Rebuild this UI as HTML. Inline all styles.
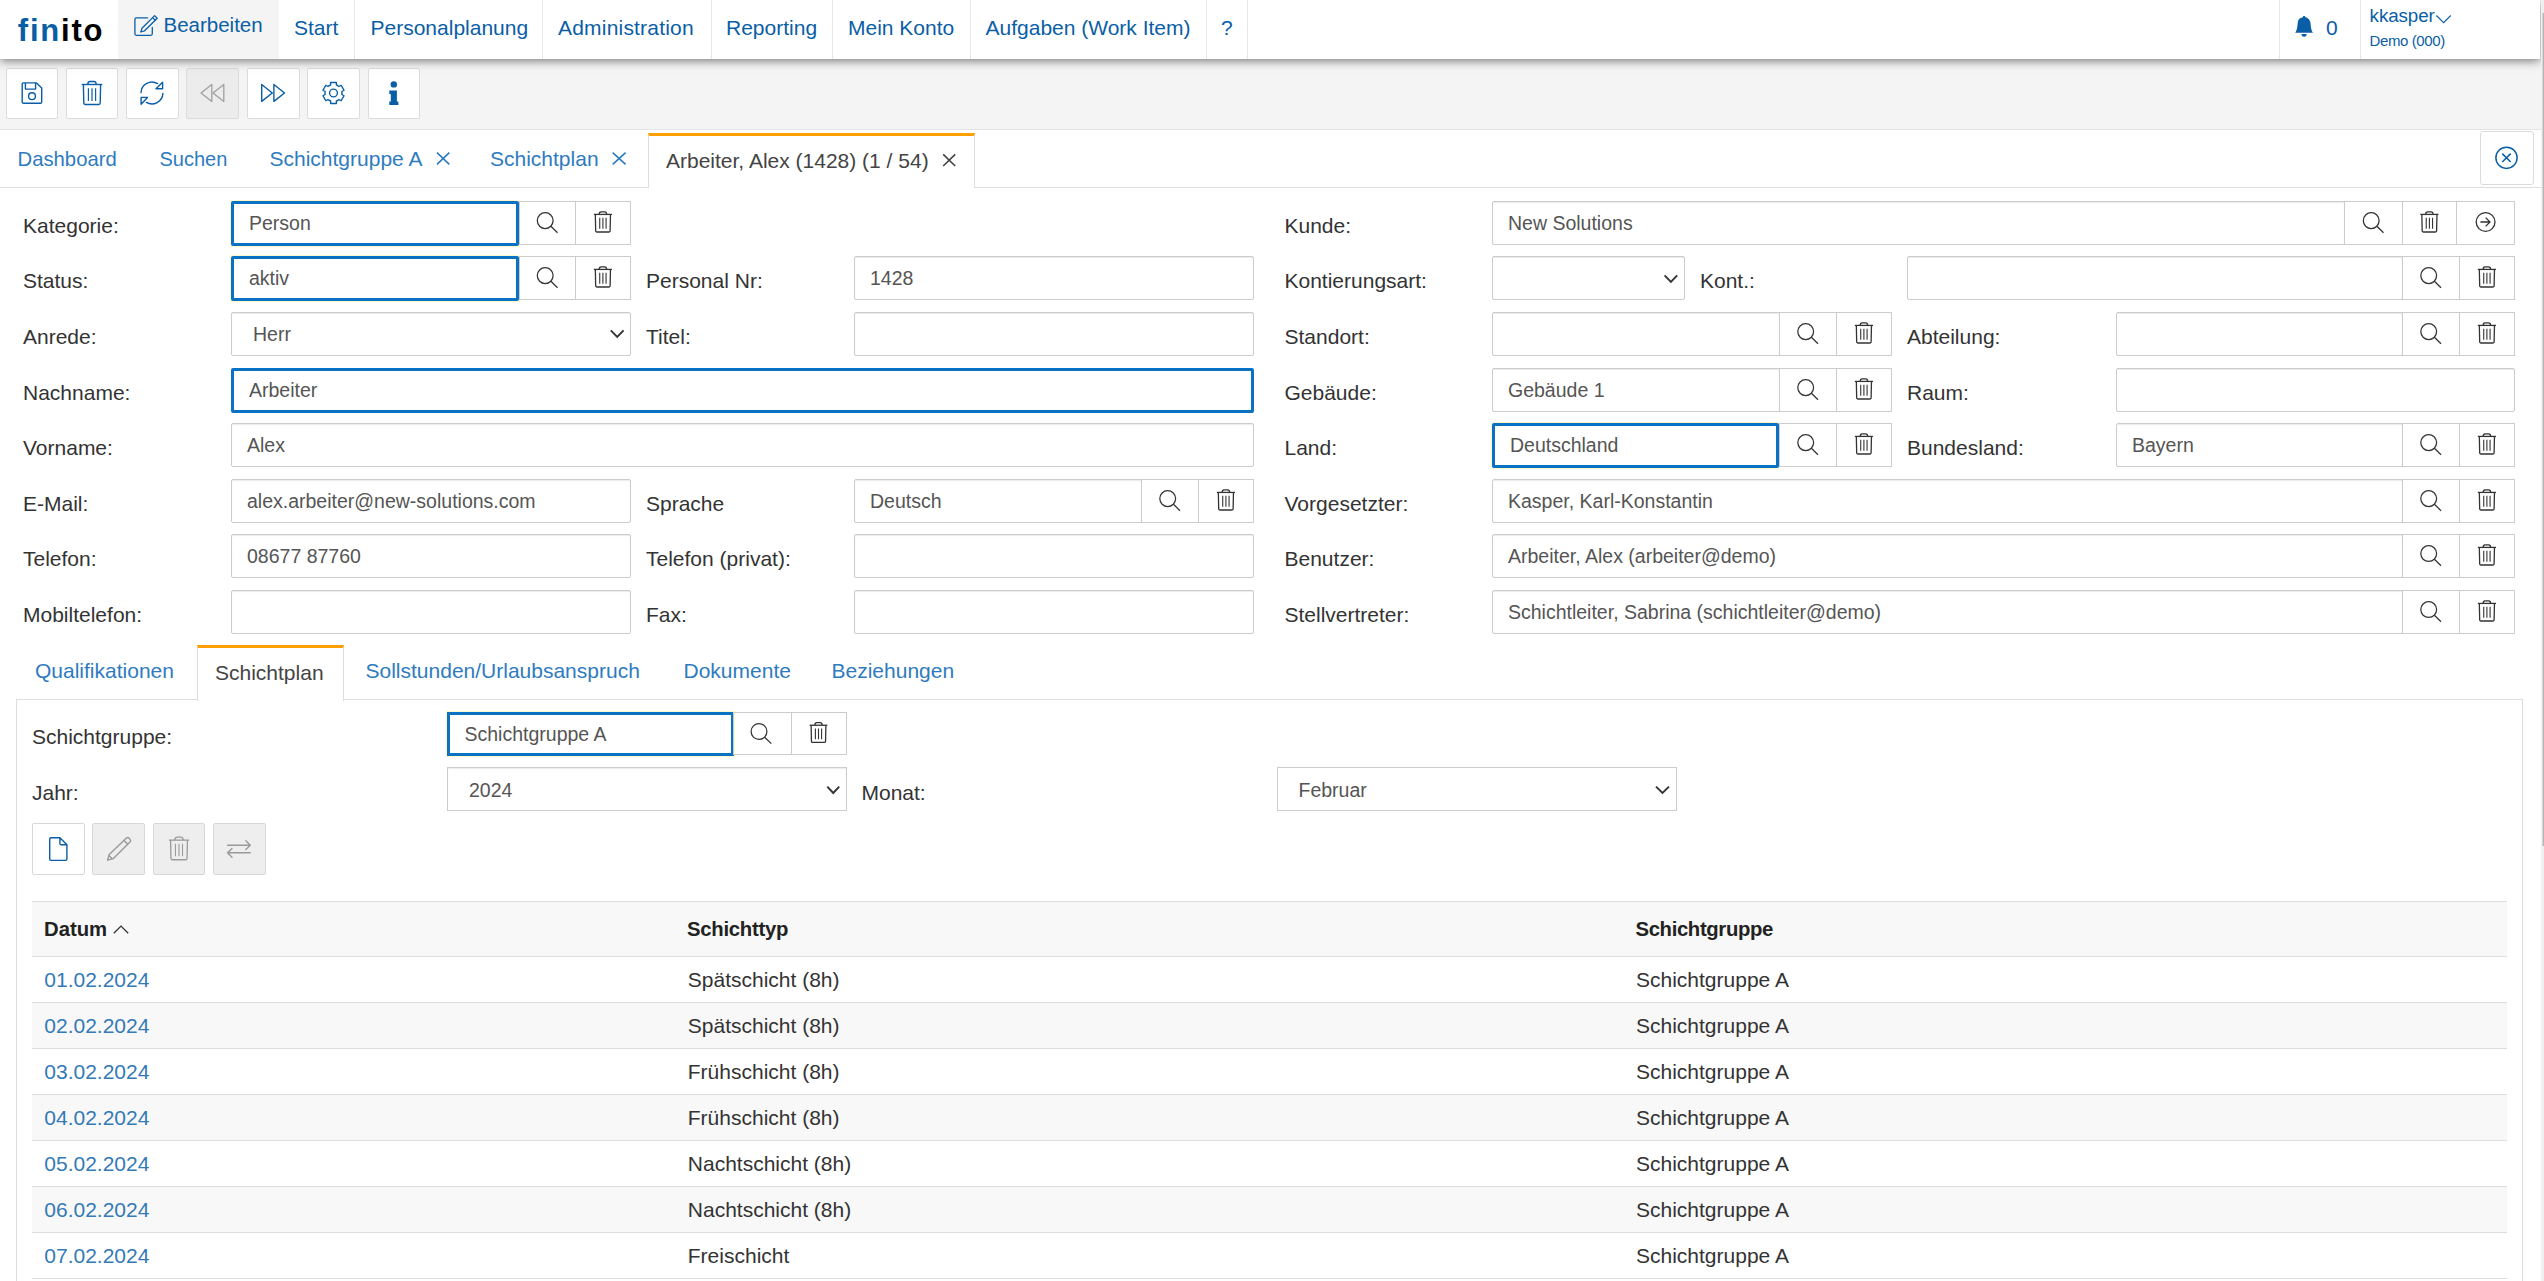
<!DOCTYPE html>
<html><head><meta charset="utf-8"><title>finito</title>
<style>
html,body{margin:0;padding:0;background:#fff;width:2544px;height:1281px;overflow:hidden;position:relative}
.a{position:absolute;box-sizing:border-box}
.t{position:absolute;white-space:nowrap;line-height:1;font-family:"Liberation Sans",sans-serif}
svg{position:absolute;left:0;top:0;z-index:5;pointer-events:none}
</style></head><body>
<div class="a" style="left:2541px;top:0px;width:3px;height:1281px;background:#f0f0f0;z-index:8"></div>
<div class="a" style="left:2542px;top:13px;width:1px;height:833px;background:#d8d8d8;z-index:8"></div>
<div class="a" style="left:2543px;top:13px;width:1px;height:833px;background:#b4b4b4;z-index:8"></div>
<div class="a" style="left:0px;top:58px;width:2541px;height:72px;background:#f4f4f4;border-bottom:1px solid #e3e3e3"></div>
<div class="a" style="left:6px;top:68px;width:52px;height:51px;background:#fff;border:1px solid #dcdcdc;border-radius:2px"></div>
<div class="a" style="left:66px;top:68px;width:52px;height:51px;background:#fff;border:1px solid #dcdcdc;border-radius:2px"></div>
<div class="a" style="left:126px;top:68px;width:53px;height:51px;background:#fff;border:1px solid #dcdcdc;border-radius:2px"></div>
<div class="a" style="left:186px;top:68px;width:53px;height:51px;background:#ececec;border:1px solid #dcdcdc;border-radius:2px"></div>
<div class="a" style="left:247px;top:68px;width:53px;height:51px;background:#fff;border:1px solid #dcdcdc;border-radius:2px"></div>
<div class="a" style="left:307px;top:68px;width:53px;height:51px;background:#fff;border:1px solid #dcdcdc;border-radius:2px"></div>
<div class="a" style="left:368px;top:68px;width:52px;height:51px;background:#fff;border:1px solid #dcdcdc;border-radius:2px"></div>
<div class="a" style="left:0px;top:0px;width:2540px;height:59px;background:#fff;box-shadow:0 2px 9px rgba(0,0,0,.5);z-index:2"></div>
<div class="a" style="left:118px;top:0px;width:161px;height:59px;background:#f4f4f4;z-index:2"></div>
<div class="a" style="left:354px;top:0px;width:1px;height:59px;background:#e6e6e6;z-index:2"></div>
<div class="a" style="left:542px;top:0px;width:1px;height:59px;background:#e6e6e6;z-index:2"></div>
<div class="a" style="left:711px;top:0px;width:1px;height:59px;background:#e6e6e6;z-index:2"></div>
<div class="a" style="left:832px;top:0px;width:1px;height:59px;background:#e6e6e6;z-index:2"></div>
<div class="a" style="left:970px;top:0px;width:1px;height:59px;background:#e6e6e6;z-index:2"></div>
<div class="a" style="left:1206px;top:0px;width:1px;height:59px;background:#e6e6e6;z-index:2"></div>
<div class="a" style="left:1247px;top:0px;width:1px;height:59px;background:#e6e6e6;z-index:2"></div>
<div class="a" style="left:2279px;top:0px;width:1px;height:59px;background:#e6e6e6;z-index:2"></div>
<div class="a" style="left:2360px;top:0px;width:1px;height:59px;background:#e6e6e6;z-index:2"></div>
<div class="t" style="left:17.8px;top:15px;font-size:31px;color:#000;font-weight:bold;z-index:3;letter-spacing:1.8px"><span style="color:#0a5ea6">fin</span>ito</div>
<div class="t" style="left:163.5px;top:15px;font-size:20.5px;color:#0a5ea6;z-index:3;">Bearbeiten</div>
<div class="t" style="left:294px;top:17px;font-size:21px;color:#0a5ea6;z-index:3;">Start</div>
<div class="t" style="left:370.5px;top:17px;font-size:21px;color:#0a5ea6;z-index:3;">Personalplanung</div>
<div class="t" style="left:558px;top:17px;font-size:21px;color:#0a5ea6;z-index:3;letter-spacing:0.2px">Administration</div>
<div class="t" style="left:726px;top:17px;font-size:21px;color:#0a5ea6;z-index:3;">Reporting</div>
<div class="t" style="left:848px;top:17px;font-size:21px;color:#0a5ea6;z-index:3;">Mein Konto</div>
<div class="t" style="left:985.5px;top:17px;font-size:21px;color:#0a5ea6;z-index:3;">Aufgaben (Work Item)</div>
<div class="t" style="left:1221px;top:17px;font-size:21px;color:#0a5ea6;z-index:3;">?</div>
<div class="t" style="left:2326px;top:17px;font-size:21px;color:#0a5ea6;z-index:3;">0</div>
<div class="t" style="left:2369.6px;top:7px;font-size:18.8px;color:#0a5ea6;z-index:3;letter-spacing:-0.1px">kkasper</div>
<div class="t" style="left:2369.6px;top:33px;font-size:15px;color:#0a5ea6;z-index:3;letter-spacing:-0.4px">Demo (000)</div>
<div class="a" style="left:0px;top:187px;width:2541px;height:1px;background:#ddd"></div>
<div class="t" style="left:17.5px;top:149px;font-size:20.3px;color:#2e7bbf;">Dashboard</div>
<div class="t" style="left:159.5px;top:149px;font-size:20px;color:#2e7bbf;">Suchen</div>
<div class="t" style="left:269.5px;top:148px;font-size:21px;color:#2e7bbf;">Schichtgruppe A</div>
<div class="t" style="left:490px;top:148px;font-size:21px;color:#2e7bbf;">Schichtplan</div>
<div class="a" style="left:648px;top:133px;width:327px;height:55px;background:#fff;border-left:1px solid #ddd;border-right:1px solid #ddd;border-top:3px solid #ffa000;box-sizing:border-box"></div>
<div class="t" style="left:666px;top:150px;font-size:21px;color:#444;">Arbeiter, Alex (1428) (1 / 54)</div>
<div class="a" style="left:2480px;top:131px;width:54px;height:54px;border:1px solid #dcdcdc;border-radius:3px;box-sizing:border-box"></div>
<div class="t" style="left:23px;top:215px;font-size:21px;color:#333;">Kategorie:</div>
<div class="a" style="left:231px;top:201px;width:288px;height:45px;background:#fff;border:3px solid #0a72c4;box-sizing:border-box;border-radius:2px;box-shadow:0 0 0 1px #fff6c8;"></div>
<div class="t" style="left:249px;top:214px;font-size:19.5px;color:#555;">Person</div>
<div class="a" style="left:519px;top:201px;width:57px;height:44px;background:#fff;border:1px solid #ccc;box-sizing:border-box"></div>
<div class="a" style="left:575px;top:201px;width:56px;height:44px;background:#fff;border:1px solid #ccc;box-sizing:border-box"></div>
<div class="t" style="left:23px;top:270px;font-size:21px;color:#333;">Status:</div>
<div class="a" style="left:231px;top:256px;width:288px;height:45px;background:#fff;border:3px solid #0a72c4;box-sizing:border-box;border-radius:2px;box-shadow:0 0 0 1px #fff6c8;"></div>
<div class="t" style="left:249px;top:269px;font-size:19.5px;color:#555;">aktiv</div>
<div class="a" style="left:519px;top:256px;width:57px;height:44px;background:#fff;border:1px solid #ccc;box-sizing:border-box"></div>
<div class="a" style="left:575px;top:256px;width:56px;height:44px;background:#fff;border:1px solid #ccc;box-sizing:border-box"></div>
<div class="t" style="left:23px;top:326px;font-size:21px;color:#333;">Anrede:</div>
<div class="a" style="left:231px;top:312px;width:400px;height:44px;background:#fff;border:1px solid #ccc;box-sizing:border-box;border-radius:2px;box-shadow:inset 0 1px 1px rgba(0,0,0,.08)"></div>
<div class="t" style="left:253px;top:325px;font-size:19.5px;color:#555;">Herr</div>
<div class="t" style="left:23px;top:382px;font-size:21px;color:#333;">Nachname:</div>
<div class="a" style="left:231px;top:368px;width:1023px;height:45px;background:#fff;border:3px solid #0a72c4;box-sizing:border-box;border-radius:2px;"></div>
<div class="t" style="left:249px;top:381px;font-size:19.5px;color:#555;">Arbeiter</div>
<div class="t" style="left:23px;top:437px;font-size:21px;color:#333;">Vorname:</div>
<div class="a" style="left:231px;top:423px;width:1023px;height:44px;background:#fff;border:1px solid #ccc;box-sizing:border-box;border-radius:2px;box-shadow:inset 0 1px 1px rgba(0,0,0,.08)"></div>
<div class="t" style="left:247px;top:436px;font-size:19.5px;color:#555;">Alex</div>
<div class="t" style="left:23px;top:493px;font-size:21px;color:#333;">E-Mail:</div>
<div class="a" style="left:231px;top:479px;width:400px;height:44px;background:#fff;border:1px solid #ccc;box-sizing:border-box;border-radius:2px;box-shadow:inset 0 1px 1px rgba(0,0,0,.08)"></div>
<div class="t" style="left:247px;top:492px;font-size:19.5px;color:#555;">alex.arbeiter@new-solutions.com</div>
<div class="t" style="left:23px;top:548px;font-size:21px;color:#333;">Telefon:</div>
<div class="a" style="left:231px;top:534px;width:400px;height:44px;background:#fff;border:1px solid #ccc;box-sizing:border-box;border-radius:2px;box-shadow:inset 0 1px 1px rgba(0,0,0,.08)"></div>
<div class="t" style="left:247px;top:547px;font-size:19.5px;color:#555;">08677 87760</div>
<div class="t" style="left:23px;top:604px;font-size:21px;color:#333;">Mobiltelefon:</div>
<div class="a" style="left:231px;top:590px;width:400px;height:44px;background:#fff;border:1px solid #ccc;box-sizing:border-box;border-radius:2px;box-shadow:inset 0 1px 1px rgba(0,0,0,.08)"></div>
<div class="t" style="left:646px;top:270px;font-size:21px;color:#333;">Personal Nr:</div>
<div class="a" style="left:854px;top:256px;width:400px;height:44px;background:#fff;border:1px solid #ccc;box-sizing:border-box;border-radius:2px;box-shadow:inset 0 1px 1px rgba(0,0,0,.08)"></div>
<div class="t" style="left:870px;top:269px;font-size:19.5px;color:#555;">1428</div>
<div class="t" style="left:646px;top:326px;font-size:21px;color:#333;">Titel:</div>
<div class="a" style="left:854px;top:312px;width:400px;height:44px;background:#fff;border:1px solid #ccc;box-sizing:border-box;border-radius:2px;box-shadow:inset 0 1px 1px rgba(0,0,0,.08)"></div>
<div class="t" style="left:646px;top:493px;font-size:21px;color:#333;">Sprache</div>
<div class="a" style="left:854px;top:479px;width:288px;height:44px;background:#fff;border:1px solid #ccc;box-sizing:border-box;border-radius:2px;box-shadow:inset 0 1px 1px rgba(0,0,0,.08)"></div>
<div class="t" style="left:870px;top:492px;font-size:19.5px;color:#555;">Deutsch</div>
<div class="a" style="left:1141px;top:479px;width:58px;height:44px;background:#fff;border:1px solid #ccc;box-sizing:border-box"></div>
<div class="a" style="left:1198px;top:479px;width:56px;height:44px;background:#fff;border:1px solid #ccc;box-sizing:border-box"></div>
<div class="t" style="left:646px;top:548px;font-size:21px;color:#333;">Telefon (privat):</div>
<div class="a" style="left:854px;top:534px;width:400px;height:44px;background:#fff;border:1px solid #ccc;box-sizing:border-box;border-radius:2px;box-shadow:inset 0 1px 1px rgba(0,0,0,.08)"></div>
<div class="t" style="left:646px;top:604px;font-size:21px;color:#333;">Fax:</div>
<div class="a" style="left:854px;top:590px;width:400px;height:44px;background:#fff;border:1px solid #ccc;box-sizing:border-box;border-radius:2px;box-shadow:inset 0 1px 1px rgba(0,0,0,.08)"></div>
<div class="t" style="left:1284.5px;top:215px;font-size:21px;color:#333;">Kunde:</div>
<div class="a" style="left:1492px;top:201px;width:853px;height:44px;background:#fff;border:1px solid #ccc;box-sizing:border-box;border-radius:2px;box-shadow:inset 0 1px 1px rgba(0,0,0,.08)"></div>
<div class="t" style="left:1508px;top:214px;font-size:19.5px;color:#555;">New Solutions</div>
<div class="a" style="left:2344px;top:201px;width:59px;height:44px;background:#fff;border:1px solid #ccc;box-sizing:border-box"></div>
<div class="a" style="left:2402px;top:201px;width:55px;height:44px;background:#fff;border:1px solid #ccc;box-sizing:border-box"></div>
<div class="a" style="left:2456px;top:201px;width:59px;height:44px;background:#fff;border:1px solid #ccc;box-sizing:border-box"></div>
<div class="t" style="left:1284.5px;top:270px;font-size:21px;color:#333;">Kontierungsart:</div>
<div class="a" style="left:1492px;top:256px;width:193px;height:44px;background:#fff;border:1px solid #ccc;box-sizing:border-box;border-radius:2px;box-shadow:inset 0 1px 1px rgba(0,0,0,.08)"></div>
<div class="t" style="left:1700px;top:270px;font-size:21px;color:#333;">Kont.:</div>
<div class="a" style="left:1907px;top:256px;width:496px;height:44px;background:#fff;border:1px solid #ccc;box-sizing:border-box;border-radius:2px;box-shadow:inset 0 1px 1px rgba(0,0,0,.08)"></div>
<div class="a" style="left:2402px;top:256px;width:58px;height:44px;background:#fff;border:1px solid #ccc;box-sizing:border-box"></div>
<div class="a" style="left:2459px;top:256px;width:56px;height:44px;background:#fff;border:1px solid #ccc;box-sizing:border-box"></div>
<div class="t" style="left:1284.5px;top:326px;font-size:21px;color:#333;">Standort:</div>
<div class="a" style="left:1492px;top:312px;width:288px;height:44px;background:#fff;border:1px solid #ccc;box-sizing:border-box;border-radius:2px;box-shadow:inset 0 1px 1px rgba(0,0,0,.08)"></div>
<div class="a" style="left:1779px;top:312px;width:58px;height:44px;background:#fff;border:1px solid #ccc;box-sizing:border-box"></div>
<div class="a" style="left:1836px;top:312px;width:56px;height:44px;background:#fff;border:1px solid #ccc;box-sizing:border-box"></div>
<div class="t" style="left:1907px;top:326px;font-size:21px;color:#333;">Abteilung:</div>
<div class="a" style="left:2116px;top:312px;width:287px;height:44px;background:#fff;border:1px solid #ccc;box-sizing:border-box;border-radius:2px;box-shadow:inset 0 1px 1px rgba(0,0,0,.08)"></div>
<div class="a" style="left:2402px;top:312px;width:58px;height:44px;background:#fff;border:1px solid #ccc;box-sizing:border-box"></div>
<div class="a" style="left:2459px;top:312px;width:56px;height:44px;background:#fff;border:1px solid #ccc;box-sizing:border-box"></div>
<div class="t" style="left:1284.5px;top:382px;font-size:21px;color:#333;">Gebäude:</div>
<div class="a" style="left:1492px;top:368px;width:288px;height:44px;background:#fff;border:1px solid #ccc;box-sizing:border-box;border-radius:2px;box-shadow:inset 0 1px 1px rgba(0,0,0,.08)"></div>
<div class="t" style="left:1508px;top:381px;font-size:19.5px;color:#555;">Gebäude 1</div>
<div class="a" style="left:1779px;top:368px;width:58px;height:44px;background:#fff;border:1px solid #ccc;box-sizing:border-box"></div>
<div class="a" style="left:1836px;top:368px;width:56px;height:44px;background:#fff;border:1px solid #ccc;box-sizing:border-box"></div>
<div class="t" style="left:1907px;top:382px;font-size:21px;color:#333;">Raum:</div>
<div class="a" style="left:2116px;top:368px;width:399px;height:44px;background:#fff;border:1px solid #ccc;box-sizing:border-box;border-radius:2px;box-shadow:inset 0 1px 1px rgba(0,0,0,.08)"></div>
<div class="t" style="left:1284.5px;top:437px;font-size:21px;color:#333;">Land:</div>
<div class="a" style="left:1492px;top:423px;width:287px;height:45px;background:#fff;border:3px solid #0a72c4;box-sizing:border-box;border-radius:2px;box-shadow:0 0 0 1px #fff6c8;"></div>
<div class="t" style="left:1510px;top:436px;font-size:19.5px;color:#555;">Deutschland</div>
<div class="a" style="left:1779px;top:423px;width:58px;height:44px;background:#fff;border:1px solid #ccc;box-sizing:border-box"></div>
<div class="a" style="left:1836px;top:423px;width:56px;height:44px;background:#fff;border:1px solid #ccc;box-sizing:border-box"></div>
<div class="t" style="left:1907px;top:437px;font-size:21px;color:#333;">Bundesland:</div>
<div class="a" style="left:2116px;top:423px;width:287px;height:44px;background:#fff;border:1px solid #ccc;box-sizing:border-box;border-radius:2px;box-shadow:inset 0 1px 1px rgba(0,0,0,.08)"></div>
<div class="t" style="left:2132px;top:436px;font-size:19.5px;color:#555;">Bayern</div>
<div class="a" style="left:2402px;top:423px;width:58px;height:44px;background:#fff;border:1px solid #ccc;box-sizing:border-box"></div>
<div class="a" style="left:2459px;top:423px;width:56px;height:44px;background:#fff;border:1px solid #ccc;box-sizing:border-box"></div>
<div class="t" style="left:1284.5px;top:493px;font-size:21px;color:#333;">Vorgesetzter:</div>
<div class="a" style="left:1492px;top:479px;width:911px;height:44px;background:#fff;border:1px solid #ccc;box-sizing:border-box;border-radius:2px;box-shadow:inset 0 1px 1px rgba(0,0,0,.08)"></div>
<div class="t" style="left:1508px;top:492px;font-size:19.5px;color:#555;">Kasper, Karl-Konstantin</div>
<div class="a" style="left:2402px;top:479px;width:58px;height:44px;background:#fff;border:1px solid #ccc;box-sizing:border-box"></div>
<div class="a" style="left:2459px;top:479px;width:56px;height:44px;background:#fff;border:1px solid #ccc;box-sizing:border-box"></div>
<div class="t" style="left:1284.5px;top:548px;font-size:21px;color:#333;">Benutzer:</div>
<div class="a" style="left:1492px;top:534px;width:911px;height:44px;background:#fff;border:1px solid #ccc;box-sizing:border-box;border-radius:2px;box-shadow:inset 0 1px 1px rgba(0,0,0,.08)"></div>
<div class="t" style="left:1508px;top:547px;font-size:19.5px;color:#555;">Arbeiter, Alex (arbeiter@demo)</div>
<div class="a" style="left:2402px;top:534px;width:58px;height:44px;background:#fff;border:1px solid #ccc;box-sizing:border-box"></div>
<div class="a" style="left:2459px;top:534px;width:56px;height:44px;background:#fff;border:1px solid #ccc;box-sizing:border-box"></div>
<div class="t" style="left:1284.5px;top:604px;font-size:21px;color:#333;">Stellvertreter:</div>
<div class="a" style="left:1492px;top:590px;width:911px;height:44px;background:#fff;border:1px solid #ccc;box-sizing:border-box;border-radius:2px;box-shadow:inset 0 1px 1px rgba(0,0,0,.08)"></div>
<div class="t" style="left:1508px;top:603px;font-size:19.5px;color:#555;">Schichtleiter, Sabrina (schichtleiter@demo)</div>
<div class="a" style="left:2402px;top:590px;width:58px;height:44px;background:#fff;border:1px solid #ccc;box-sizing:border-box"></div>
<div class="a" style="left:2459px;top:590px;width:56px;height:44px;background:#fff;border:1px solid #ccc;box-sizing:border-box"></div>
<div class="a" style="left:16px;top:699px;width:2507px;height:700px;border:1px solid #ddd;box-sizing:border-box"></div>
<div class="a" style="left:197px;top:645px;width:147px;height:56px;background:#fff;border-left:1px solid #ddd;border-right:1px solid #ddd;border-top:3px solid #ffa000;box-sizing:border-box"></div>
<div class="t" style="left:35px;top:660px;font-size:21px;color:#2e7bbf;">Qualifikationen</div>
<div class="t" style="left:215px;top:662px;font-size:21px;color:#444;">Schichtplan</div>
<div class="t" style="left:365.5px;top:660px;font-size:21px;color:#2e7bbf;">Sollstunden/Urlaubsanspruch</div>
<div class="t" style="left:683.5px;top:660px;font-size:21px;color:#2e7bbf;">Dokumente</div>
<div class="t" style="left:831.5px;top:660px;font-size:21px;color:#2e7bbf;">Beziehungen</div>
<div class="t" style="left:32px;top:726px;font-size:21px;color:#333;">Schichtgruppe:</div>
<div class="a" style="left:447px;top:712px;width:287px;height:44px;background:#fff;border:3px solid #0a72c4;box-sizing:border-box;box-shadow:0 0 0 1px #fff6c8"></div>
<div class="t" style="left:464.5px;top:725px;font-size:19.5px;color:#555;">Schichtgruppe A</div>
<div class="a" style="left:733px;top:712px;width:59px;height:43px;border:1px solid #ccc;box-sizing:border-box"></div>
<div class="a" style="left:791px;top:712px;width:56px;height:43px;border:1px solid #ccc;box-sizing:border-box"></div>
<div class="t" style="left:32px;top:782px;font-size:21px;color:#333;">Jahr:</div>
<div class="a" style="left:447px;top:767px;width:400px;height:44px;border:1px solid #ccc;box-sizing:border-box;box-shadow:inset 0 1px 1px rgba(0,0,0,.08)"></div>
<div class="t" style="left:469px;top:781px;font-size:19.5px;color:#555;">2024</div>
<div class="t" style="left:861.5px;top:782px;font-size:21px;color:#333;">Monat:</div>
<div class="a" style="left:1277px;top:767px;width:400px;height:44px;border:1px solid #ccc;box-sizing:border-box"></div>
<div class="t" style="left:1298.5px;top:781px;font-size:19.5px;color:#555;">Februar</div>
<div class="a" style="left:32px;top:823px;width:53px;height:52px;background:#fff;border:1px solid #d8d8d8;border-radius:2px;box-sizing:border-box"></div>
<div class="a" style="left:92px;top:823px;width:53px;height:52px;background:#eee;border:1px solid #d8d8d8;border-radius:2px;box-sizing:border-box"></div>
<div class="a" style="left:153px;top:823px;width:52px;height:52px;background:#eee;border:1px solid #d8d8d8;border-radius:2px;box-sizing:border-box"></div>
<div class="a" style="left:213px;top:823px;width:53px;height:52px;background:#eee;border:1px solid #d8d8d8;border-radius:2px;box-sizing:border-box"></div>
<div class="a" style="left:32px;top:901px;width:2475px;height:56px;background:#f8f8f8;border-top:1px solid #ddd;border-bottom:1px solid #ddd;box-sizing:border-box"></div>
<div class="t" style="left:44px;top:919px;font-size:20.3px;color:#222;font-weight:bold;">Datum</div>
<div class="t" style="left:687px;top:919px;font-size:20.3px;color:#222;font-weight:bold;letter-spacing:-0.25px">Schichttyp</div>
<div class="t" style="left:1635.5px;top:919px;font-size:20.3px;color:#222;font-weight:bold;letter-spacing:-0.35px">Schichtgruppe</div>
<div class="a" style="left:32px;top:957px;width:2475px;height:46px;background:#fff;border-bottom:1px solid #ddd;box-sizing:border-box"></div>
<div class="t" style="left:44.3px;top:969px;font-size:21px;color:#337ab7;">01.02.2024</div>
<div class="t" style="left:687.8px;top:969px;font-size:21px;color:#333;">Spätschicht (8h)</div>
<div class="t" style="left:1636px;top:969px;font-size:21px;color:#333;">Schichtgruppe A</div>
<div class="a" style="left:32px;top:1003px;width:2475px;height:46px;background:#f8f8f8;border-bottom:1px solid #ddd;box-sizing:border-box"></div>
<div class="t" style="left:44.3px;top:1015px;font-size:21px;color:#337ab7;">02.02.2024</div>
<div class="t" style="left:687.8px;top:1015px;font-size:21px;color:#333;">Spätschicht (8h)</div>
<div class="t" style="left:1636px;top:1015px;font-size:21px;color:#333;">Schichtgruppe A</div>
<div class="a" style="left:32px;top:1049px;width:2475px;height:46px;background:#fff;border-bottom:1px solid #ddd;box-sizing:border-box"></div>
<div class="t" style="left:44.3px;top:1061px;font-size:21px;color:#337ab7;">03.02.2024</div>
<div class="t" style="left:687.8px;top:1061px;font-size:21px;color:#333;">Frühschicht (8h)</div>
<div class="t" style="left:1636px;top:1061px;font-size:21px;color:#333;">Schichtgruppe A</div>
<div class="a" style="left:32px;top:1095px;width:2475px;height:46px;background:#f8f8f8;border-bottom:1px solid #ddd;box-sizing:border-box"></div>
<div class="t" style="left:44.3px;top:1107px;font-size:21px;color:#337ab7;">04.02.2024</div>
<div class="t" style="left:687.8px;top:1107px;font-size:21px;color:#333;">Frühschicht (8h)</div>
<div class="t" style="left:1636px;top:1107px;font-size:21px;color:#333;">Schichtgruppe A</div>
<div class="a" style="left:32px;top:1141px;width:2475px;height:46px;background:#fff;border-bottom:1px solid #ddd;box-sizing:border-box"></div>
<div class="t" style="left:44.3px;top:1153px;font-size:21px;color:#337ab7;">05.02.2024</div>
<div class="t" style="left:687.8px;top:1153px;font-size:21px;color:#333;">Nachtschicht (8h)</div>
<div class="t" style="left:1636px;top:1153px;font-size:21px;color:#333;">Schichtgruppe A</div>
<div class="a" style="left:32px;top:1187px;width:2475px;height:46px;background:#f8f8f8;border-bottom:1px solid #ddd;box-sizing:border-box"></div>
<div class="t" style="left:44.3px;top:1199px;font-size:21px;color:#337ab7;">06.02.2024</div>
<div class="t" style="left:687.8px;top:1199px;font-size:21px;color:#333;">Nachtschicht (8h)</div>
<div class="t" style="left:1636px;top:1199px;font-size:21px;color:#333;">Schichtgruppe A</div>
<div class="a" style="left:32px;top:1233px;width:2475px;height:46px;background:#fff;border-bottom:1px solid #ddd;box-sizing:border-box"></div>
<div class="t" style="left:44.3px;top:1245px;font-size:21px;color:#337ab7;">07.02.2024</div>
<div class="t" style="left:687.8px;top:1245px;font-size:21px;color:#333;">Freischicht</div>
<div class="t" style="left:1636px;top:1245px;font-size:21px;color:#333;">Schichtgruppe A</div>
<svg width="2544" height="1281" viewBox="0 0 2544 1281">
<g fill="none" stroke="#0a5ea6" stroke-width="1.3" stroke-linecap="round" stroke-linejoin="round"><path d="M147.6 17.9H136.4a1.5 1.5 0 0 0-1.5 1.5v14.4a1.5 1.5 0 0 0 1.5 1.5h14.4a1.5 1.5 0 0 0 1.5-1.5V27.4"/><path d="M154.6 15.6l2.6 2.6-12.6 12.6-3.8 1.2 1.2-3.8z"/><path d="M152.6 17.6l2.6 2.6"/></g>
<g fill="none" stroke="#0a5ea6" stroke-width="1.4" stroke-linejoin="round"><path d="M23.5 82.9h13l5.2 5.2v13.8a1.3 1.3 0 0 1-1.3 1.3H23.5a1.3 1.3 0 0 1-1.3-1.3V84.2a1.3 1.3 0 0 1 1.3-1.3z"/><path d="M25.4 83v6.1h10.2V83"/><circle cx="32" cy="96.2" r="3.4"/></g>
<g fill="none" stroke="#0a5ea6" stroke-width="1.4" stroke-linecap="butt" stroke-linejoin="round"><path d="M81.70 84.50H102.30"/><path d="M87.80 84.50C87.80 81.90 88.60 81.50 90.00 81.50H94.00C95.40 81.50 96.20 81.90 96.20 84.50"/><path d="M83.40 84.50L83.80 103.10A1.40 1.40 0 0 0 85.20 104.50H98.80A1.40 1.40 0 0 0 100.20 103.10L100.60 84.50"/><path stroke-width="1.19" d="M88.40 88.30V100.90M92.00 88.30V100.90M95.60 88.30V100.90"/></g>
<g fill="none" stroke="#0a5ea6" stroke-width="1.4" stroke-linejoin="round" stroke-linecap="round"><path d="M141 92.6A11 11 0 0 1 157.6 83.6"/><path d="M162.6 82.3v6.5h-6.6z"/><path d="M162.9 93.4A11 11 0 0 1 146.4 102.4"/><path d="M141.1 104.3v-6.9h6.4z"/></g>
<g fill="none" stroke="#a0a0a0" stroke-width="1.3" stroke-linejoin="round"><path d="M201 92.9l10.8-8.4v16.9z"/><path d="M213 92.9l10.8-8.4v16.9z"/></g>
<g fill="none" stroke="#0a5ea6" stroke-width="1.4" stroke-linejoin="round"><path d="M261.7 84.5v16.9l10.6-8.4z"/><path d="M273.9 84.5v16.9l10.6-8.4z"/></g>
<path d="M330.60 85.00L330.60 82.50L336.40 82.50L336.40 85.00A8.51 8.51 0 0 1 338.98 86.49L341.14 85.24L344.04 90.26L341.88 91.51A8.51 8.51 0 0 1 341.88 94.49L344.04 95.74L341.14 100.76L338.98 99.51A8.51 8.51 0 0 1 336.40 101.00L336.40 103.50L330.60 103.50L330.60 101.00A8.51 8.51 0 0 1 328.02 99.51L325.86 100.76L322.96 95.74L325.12 94.49A8.51 8.51 0 0 1 325.12 91.51L322.96 90.26L325.86 85.24L328.02 86.49A8.51 8.51 0 0 1 330.60 85.00Z" fill="none" stroke="#0a5ea6" stroke-width="1.4" stroke-linejoin="round"/><circle cx="333.5" cy="93" r="3.9" fill="none" stroke="#0a5ea6" stroke-width="1.4"/>
<g fill="#0a5ea6"><circle cx="393.8" cy="84.4" r="3.2"/><path d="M389.3 90.4h7.6v11h1.5v3.5h-9.1v-3.5h1.5v-7.5h-1.5z"/></g>
<path d="M437 152.6L449.3 164.4M449.3 152.6L437 164.4" stroke="#2e7bbf" stroke-width="1.6" fill="none"/>
<path d="M612.7 152.6L625.6 164.4M625.6 152.6L612.7 164.4" stroke="#2e7bbf" stroke-width="1.6" fill="none"/>
<path d="M943.2 154.4L955.2 166M955.2 154.4L943.2 166" stroke="#444" stroke-width="1.6" fill="none"/>
<g fill="none" stroke="#0a5ea6" stroke-width="1.5"><circle cx="2506.5" cy="157.8" r="10.6"/><path d="M2502.3 153.6l8.4 8.4M2510.7 153.6l-8.4 8.4"/></g>
<path transform="translate(2293.7 15.9) scale(1.3)" fill="#0a5ea6" d="M8 16a2 2 0 0 0 2-2H6a2 2 0 0 0 2 2zm.995-14.901a1 1 0 1 0-1.99 0A5.002 5.002 0 0 0 3 6c0 1.098-.5 6-2 7h14c-1.5-1-2-5.902-2-7 0-2.42-1.72-4.44-4.005-4.901z"/>
<path d="M2436.4 15.5l7.2 7.1 7.1-7.1" fill="none" stroke="#0a5ea6" stroke-width="1.1"/>
<g fill="none" stroke="#333" stroke-width="1.25"><circle cx="545.2" cy="220.6" r="7.9"/><path d="M550.9 226.3L557.5 232.7"/></g>
<g fill="none" stroke="#333" stroke-width="1.3" stroke-linecap="butt" stroke-linejoin="round"><path d="M593.84 214.42H611.96"/><path d="M599.20 214.42C599.20 212.13 599.91 211.78 601.14 211.78H604.66C605.89 211.78 606.60 212.13 606.60 214.42"/><path d="M595.33 214.42L595.68 230.78A1.23 1.23 0 0 0 596.92 232.02H608.88A1.23 1.23 0 0 0 610.12 230.78L610.47 214.42"/><path stroke-width="1.10" d="M599.73 217.76V228.85M602.90 217.76V228.85M606.07 217.76V228.85"/></g>
<g fill="none" stroke="#333" stroke-width="1.25"><circle cx="545.2" cy="275.6" r="7.9"/><path d="M550.9 281.3L557.5 287.7"/></g>
<g fill="none" stroke="#333" stroke-width="1.3" stroke-linecap="butt" stroke-linejoin="round"><path d="M593.84 269.42H611.96"/><path d="M599.20 269.42C599.20 267.13 599.91 266.78 601.14 266.78H604.66C605.89 266.78 606.60 267.13 606.60 269.42"/><path d="M595.33 269.42L595.68 285.78A1.23 1.23 0 0 0 596.92 287.02H608.88A1.23 1.23 0 0 0 610.12 285.78L610.47 269.42"/><path stroke-width="1.10" d="M599.73 272.76V283.85M602.90 272.76V283.85M606.07 272.76V283.85"/></g>
<g fill="none" stroke="#333" stroke-width="1.25"><circle cx="1167.7" cy="498.6" r="7.9"/><path d="M1173.4 504.3L1180.0 510.7"/></g>
<g fill="none" stroke="#333" stroke-width="1.3" stroke-linecap="butt" stroke-linejoin="round"><path d="M1216.84 492.42H1234.96"/><path d="M1222.20 492.42C1222.20 490.13 1222.91 489.78 1224.14 489.78H1227.66C1228.89 489.78 1229.60 490.13 1229.60 492.42"/><path d="M1218.33 492.42L1218.68 508.78A1.23 1.23 0 0 0 1219.92 510.02H1231.88A1.23 1.23 0 0 0 1233.12 508.78L1233.47 492.42"/><path stroke-width="1.10" d="M1222.73 495.76V506.85M1225.90 495.76V506.85M1229.07 495.76V506.85"/></g>
<g fill="none" stroke="#333" stroke-width="1.25"><circle cx="2371.2" cy="220.6" r="7.9"/><path d="M2376.9 226.3L2383.5 232.7"/></g>
<g fill="none" stroke="#333" stroke-width="1.3" stroke-linecap="butt" stroke-linejoin="round"><path d="M2420.34 214.42H2438.46"/><path d="M2425.70 214.42C2425.70 212.13 2426.41 211.78 2427.64 211.78H2431.16C2432.39 211.78 2433.10 212.13 2433.10 214.42"/><path d="M2421.83 214.42L2422.18 230.78A1.23 1.23 0 0 0 2423.42 232.02H2435.38A1.23 1.23 0 0 0 2436.62 230.78L2436.97 214.42"/><path stroke-width="1.10" d="M2426.23 217.76V228.85M2429.40 217.76V228.85M2432.57 217.76V228.85"/></g>
<g fill="none" stroke="#333" stroke-width="1.3"><circle cx="2485.6" cy="222" r="9.4"/><path d="M2480.4 222H2490.0M2485.6 217.6l4.4 4.4-4.4 4.4"/></g>
<g fill="none" stroke="#333" stroke-width="1.25"><circle cx="2428.7" cy="275.6" r="7.9"/><path d="M2434.4 281.3L2441.0 287.7"/></g>
<g fill="none" stroke="#333" stroke-width="1.3" stroke-linecap="butt" stroke-linejoin="round"><path d="M2477.84 269.42H2495.96"/><path d="M2483.20 269.42C2483.20 267.13 2483.91 266.78 2485.14 266.78H2488.66C2489.89 266.78 2490.60 267.13 2490.60 269.42"/><path d="M2479.33 269.42L2479.68 285.78A1.23 1.23 0 0 0 2480.92 287.02H2492.88A1.23 1.23 0 0 0 2494.12 285.78L2494.47 269.42"/><path stroke-width="1.10" d="M2483.73 272.76V283.85M2486.90 272.76V283.85M2490.07 272.76V283.85"/></g>
<g fill="none" stroke="#333" stroke-width="1.25"><circle cx="1805.7" cy="331.6" r="7.9"/><path d="M1811.4 337.3L1818.0 343.7"/></g>
<g fill="none" stroke="#333" stroke-width="1.3" stroke-linecap="butt" stroke-linejoin="round"><path d="M1854.84 325.42H1872.96"/><path d="M1860.20 325.42C1860.20 323.13 1860.91 322.78 1862.14 322.78H1865.66C1866.89 322.78 1867.60 323.13 1867.60 325.42"/><path d="M1856.33 325.42L1856.68 341.78A1.23 1.23 0 0 0 1857.92 343.02H1869.88A1.23 1.23 0 0 0 1871.12 341.78L1871.47 325.42"/><path stroke-width="1.10" d="M1860.73 328.76V339.85M1863.90 328.76V339.85M1867.07 328.76V339.85"/></g>
<g fill="none" stroke="#333" stroke-width="1.25"><circle cx="2428.7" cy="331.6" r="7.9"/><path d="M2434.4 337.3L2441.0 343.7"/></g>
<g fill="none" stroke="#333" stroke-width="1.3" stroke-linecap="butt" stroke-linejoin="round"><path d="M2477.84 325.42H2495.96"/><path d="M2483.20 325.42C2483.20 323.13 2483.91 322.78 2485.14 322.78H2488.66C2489.89 322.78 2490.60 323.13 2490.60 325.42"/><path d="M2479.33 325.42L2479.68 341.78A1.23 1.23 0 0 0 2480.92 343.02H2492.88A1.23 1.23 0 0 0 2494.12 341.78L2494.47 325.42"/><path stroke-width="1.10" d="M2483.73 328.76V339.85M2486.90 328.76V339.85M2490.07 328.76V339.85"/></g>
<g fill="none" stroke="#333" stroke-width="1.25"><circle cx="1805.7" cy="387.6" r="7.9"/><path d="M1811.4 393.3L1818.0 399.7"/></g>
<g fill="none" stroke="#333" stroke-width="1.3" stroke-linecap="butt" stroke-linejoin="round"><path d="M1854.84 381.42H1872.96"/><path d="M1860.20 381.42C1860.20 379.13 1860.91 378.78 1862.14 378.78H1865.66C1866.89 378.78 1867.60 379.13 1867.60 381.42"/><path d="M1856.33 381.42L1856.68 397.78A1.23 1.23 0 0 0 1857.92 399.02H1869.88A1.23 1.23 0 0 0 1871.12 397.78L1871.47 381.42"/><path stroke-width="1.10" d="M1860.73 384.76V395.85M1863.90 384.76V395.85M1867.07 384.76V395.85"/></g>
<g fill="none" stroke="#333" stroke-width="1.25"><circle cx="1805.7" cy="442.6" r="7.9"/><path d="M1811.4 448.3L1818.0 454.7"/></g>
<g fill="none" stroke="#333" stroke-width="1.3" stroke-linecap="butt" stroke-linejoin="round"><path d="M1854.84 436.42H1872.96"/><path d="M1860.20 436.42C1860.20 434.13 1860.91 433.78 1862.14 433.78H1865.66C1866.89 433.78 1867.60 434.13 1867.60 436.42"/><path d="M1856.33 436.42L1856.68 452.78A1.23 1.23 0 0 0 1857.92 454.02H1869.88A1.23 1.23 0 0 0 1871.12 452.78L1871.47 436.42"/><path stroke-width="1.10" d="M1860.73 439.76V450.85M1863.90 439.76V450.85M1867.07 439.76V450.85"/></g>
<g fill="none" stroke="#333" stroke-width="1.25"><circle cx="2428.7" cy="442.6" r="7.9"/><path d="M2434.4 448.3L2441.0 454.7"/></g>
<g fill="none" stroke="#333" stroke-width="1.3" stroke-linecap="butt" stroke-linejoin="round"><path d="M2477.84 436.42H2495.96"/><path d="M2483.20 436.42C2483.20 434.13 2483.91 433.78 2485.14 433.78H2488.66C2489.89 433.78 2490.60 434.13 2490.60 436.42"/><path d="M2479.33 436.42L2479.68 452.78A1.23 1.23 0 0 0 2480.92 454.02H2492.88A1.23 1.23 0 0 0 2494.12 452.78L2494.47 436.42"/><path stroke-width="1.10" d="M2483.73 439.76V450.85M2486.90 439.76V450.85M2490.07 439.76V450.85"/></g>
<g fill="none" stroke="#333" stroke-width="1.25"><circle cx="2428.7" cy="498.6" r="7.9"/><path d="M2434.4 504.3L2441.0 510.7"/></g>
<g fill="none" stroke="#333" stroke-width="1.3" stroke-linecap="butt" stroke-linejoin="round"><path d="M2477.84 492.42H2495.96"/><path d="M2483.20 492.42C2483.20 490.13 2483.91 489.78 2485.14 489.78H2488.66C2489.89 489.78 2490.60 490.13 2490.60 492.42"/><path d="M2479.33 492.42L2479.68 508.78A1.23 1.23 0 0 0 2480.92 510.02H2492.88A1.23 1.23 0 0 0 2494.12 508.78L2494.47 492.42"/><path stroke-width="1.10" d="M2483.73 495.76V506.85M2486.90 495.76V506.85M2490.07 495.76V506.85"/></g>
<g fill="none" stroke="#333" stroke-width="1.25"><circle cx="2428.7" cy="553.6" r="7.9"/><path d="M2434.4 559.3L2441.0 565.7"/></g>
<g fill="none" stroke="#333" stroke-width="1.3" stroke-linecap="butt" stroke-linejoin="round"><path d="M2477.84 547.42H2495.96"/><path d="M2483.20 547.42C2483.20 545.13 2483.91 544.78 2485.14 544.78H2488.66C2489.89 544.78 2490.60 545.13 2490.60 547.42"/><path d="M2479.33 547.42L2479.68 563.78A1.23 1.23 0 0 0 2480.92 565.02H2492.88A1.23 1.23 0 0 0 2494.12 563.78L2494.47 547.42"/><path stroke-width="1.10" d="M2483.73 550.76V561.85M2486.90 550.76V561.85M2490.07 550.76V561.85"/></g>
<g fill="none" stroke="#333" stroke-width="1.25"><circle cx="2428.7" cy="609.6" r="7.9"/><path d="M2434.4 615.3L2441.0 621.7"/></g>
<g fill="none" stroke="#333" stroke-width="1.3" stroke-linecap="butt" stroke-linejoin="round"><path d="M2477.84 603.42H2495.96"/><path d="M2483.20 603.42C2483.20 601.13 2483.91 600.78 2485.14 600.78H2488.66C2489.89 600.78 2490.60 601.13 2490.60 603.42"/><path d="M2479.33 603.42L2479.68 619.78A1.23 1.23 0 0 0 2480.92 621.02H2492.88A1.23 1.23 0 0 0 2494.12 619.78L2494.47 603.42"/><path stroke-width="1.10" d="M2483.73 606.76V617.85M2486.90 606.76V617.85M2490.07 606.76V617.85"/></g>
<path d="M610.8 330.4L617.2 336.8L623.6 330.4" fill="none" stroke="#333" stroke-width="1.9"/>
<path d="M1664.6 275.4L1670.9 281.8L1677.2 275.4" fill="none" stroke="#333" stroke-width="1.9"/>
<path d="M827.3 786.6L833.25 793L839.2 786.6" fill="none" stroke="#333" stroke-width="1.9"/>
<path d="M1656 786.6L1662.5 793L1669 786.6" fill="none" stroke="#333" stroke-width="1.9"/>
<g fill="none" stroke="#333" stroke-width="1.25"><circle cx="759" cy="731.5" r="7.9"/><path d="M764.7 737.2L771.3 743.6"/></g>
<g fill="none" stroke="#333" stroke-width="1.3" stroke-linecap="butt" stroke-linejoin="round"><path d="M809.64 725.25H827.36"/><path d="M814.89 725.25C814.89 723.02 815.58 722.67 816.78 722.67H820.22C821.42 722.67 822.11 723.02 822.11 725.25"/><path d="M811.10 725.25L811.45 741.25A1.20 1.20 0 0 0 812.65 742.45H824.35A1.20 1.20 0 0 0 825.55 741.25L825.90 725.25"/><path stroke-width="1.10" d="M815.40 728.52V739.36M818.50 728.52V739.36M821.60 728.52V739.36"/></g>
<path d="M51 837.7h8.9l7 7v14.4a1.3 1.3 0 0 1-1.3 1.3H51a1.3 1.3 0 0 1-1.3-1.3V839a1.3 1.3 0 0 1 1.3-1.3z M59.9 837.7v5.7a1.3 1.3 0 0 0 1.3 1.3h5.7" fill="none" stroke="#0a5ea6" stroke-width="1.4" stroke-linejoin="round"/>
<g fill="none" stroke="#9a9a9a" stroke-width="1.4" stroke-linejoin="round"><path d="M126.2 838.2a2 2 0 0 1 2.8 0l1 1a2 2 0 0 1 0 2.8l-16.6 16.6-5.8 1.6 1.6-5.8z"/><path d="M124 840.4l3.8 3.8M108.6 855.2l3.8 3.8"/></g>
<g fill="none" stroke="#9a9a9a" stroke-width="1.3" stroke-linecap="butt" stroke-linejoin="round"><path d="M168.91 840.14H189.09"/><path d="M174.88 840.14C174.88 837.59 175.67 837.20 177.04 837.20H180.96C182.33 837.20 183.12 837.59 183.12 840.14"/><path d="M170.57 840.14L170.96 858.36A1.37 1.37 0 0 0 172.34 859.74H185.66A1.37 1.37 0 0 0 187.04 858.36L187.43 840.14"/><path stroke-width="1.10" d="M175.47 843.86V856.21M179.00 843.86V856.21M182.53 843.86V856.21"/></g>
<g fill="none" stroke="#9a9a9a" stroke-width="1.4" stroke-linecap="round" stroke-linejoin="round"><path d="M227.5 845.2H250.3M245.8 840.8l4.5 4.4-4.5 4.4"/><path d="M250.3 852.8H227.5M232 848.4l-4.5 4.4 4.5 4.4"/></g>
<path d="M113.8 933.3l7.2-7.2 7.2 7.2" fill="none" stroke="#333" stroke-width="1.3"/>
</svg>
</body></html>
